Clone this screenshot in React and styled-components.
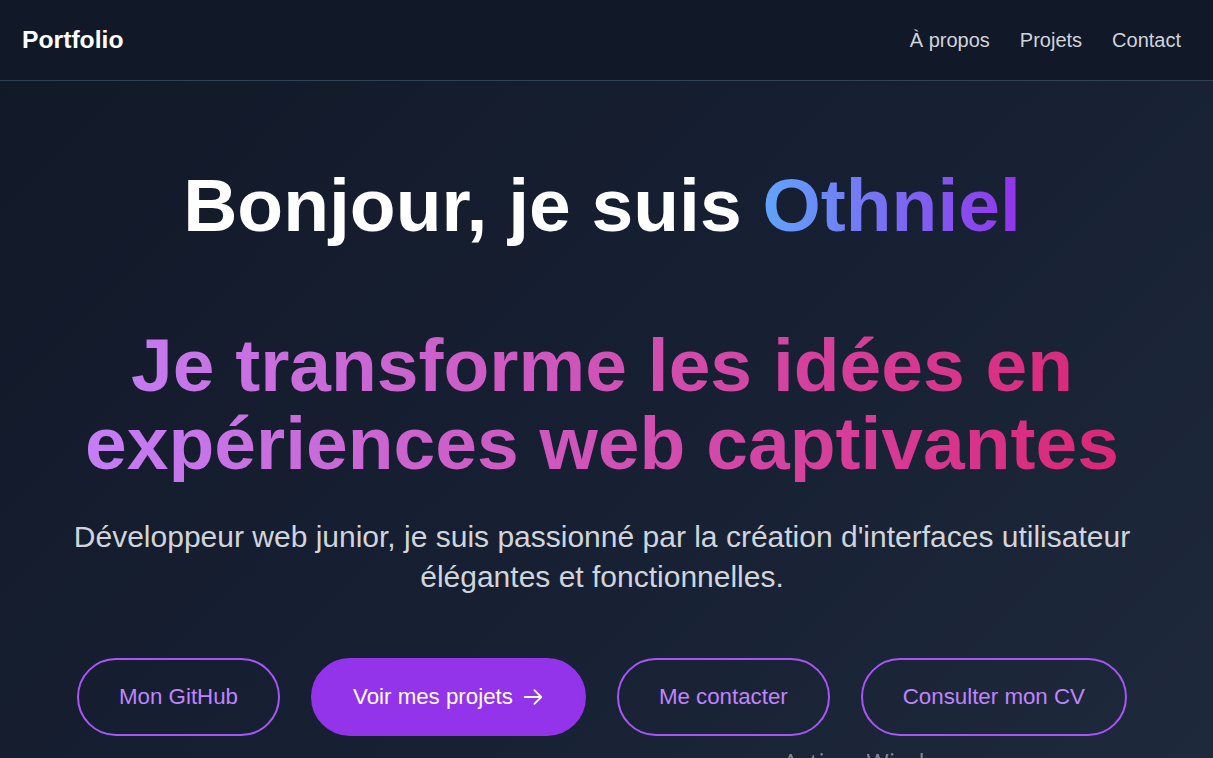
import React from "react";
import styled, { createGlobalStyle } from "styled-components";

const GlobalStyle = createGlobalStyle`
  * {
    box-sizing: border-box;
  }
  html,
  body {
    margin: 0;
    padding: 0;
    background: #111827;
    font-family: "Liberation Sans", Arial, sans-serif;
  }
`;

const Page = styled.div`
  min-height: 100vh;
  display: flex;
  flex-direction: column;
  background: linear-gradient(135deg, #111827 0%, #172033 55%, #1e293b 100%);
  overflow: hidden;
`;

const Navbar = styled.nav`
  height: 81px;
  display: flex;
  align-items: center;
  justify-content: space-between;
  padding: 0 32px 0 22px;
  background: #111827;
  border-bottom: 1px solid #334155;
`;

const Brand = styled.span`
  color: #ffffff;
  font-size: 24.7px;
  font-weight: bold;
`;

const NavLinks = styled.div`
  display: flex;
  align-items: center;
  gap: 30px;
`;

const NavLink = styled.a`
  color: #d1d5db;
  font-size: 20px;
  text-decoration: none;
  cursor: pointer;
`;

const Hero = styled.section`
  display: flex;
  flex-direction: column;
  align-items: center;
  text-align: center;
  padding: 87px 9px 0 0;
`;

const Greeting = styled.h1`
  margin: 0;
  color: #ffffff;
  font-size: 75px;
  line-height: 75px;
  font-weight: bold;
`;

const Name = styled.span`
  background: linear-gradient(90deg, #60a5fa, #9333ea);
  -webkit-background-clip: text;
  background-clip: text;
  color: transparent;
`;

const Tagline = styled.h2`
  display: inline-block;
  margin: 83px 0 0;
  font-size: 75px;
  line-height: 78px;
  font-weight: bold;
  background: linear-gradient(90deg, #c47ef6, #db2777);
  -webkit-background-clip: text;
  background-clip: text;
  color: transparent;
`;

const Intro = styled.p`
  margin: 35px 0 0;
  max-width: 1100px;
  color: #d1d5db;
  font-size: 30px;
  line-height: 40px;
`;

const Actions = styled.div`
  display: flex;
  align-items: center;
  gap: 31px;
  margin-top: 61px;
`;

const Button = styled.a`
  display: inline-flex;
  align-items: center;
  gap: 9px;
  height: 78px;
  padding: 0 40px;
  border-radius: 999px;
  border: 2px solid ${(p) => (p.$primary ? "#9333ea" : "#a855f7")};
  background: ${(p) => (p.$primary ? "#9333ea" : "transparent")};
  color: ${(p) => (p.$primary ? "#ffffff" : "#c084fc")};
  font-size: 22.3px;
  text-decoration: none;
  cursor: pointer;
`;

const Watermark = styled.div`
  position: fixed;
  left: 783px;
  top: 745px;
  color: rgba(190, 194, 202, 0.6);
  font-family: "Noto Sans", "Open Sans", sans-serif;
  font-size: 24px;
  pointer-events: none;
`;

const ArrowIcon = () => (
  <svg
    width="22"
    height="22"
    viewBox="0 0 24 24"
    fill="none"
    stroke="currentColor"
    strokeWidth="2"
    strokeLinecap="round"
    strokeLinejoin="round"
  >
    <path d="M13.5 4.5 21 12m0 0-7.5 7.5M21 12H3" />
  </svg>
);

const App = () => {
  return (
    <Page>
      <GlobalStyle />
      <Navbar>
        <Brand>Portfolio</Brand>
        <NavLinks>
          <NavLink>À propos</NavLink>
          <NavLink>Projets</NavLink>
          <NavLink>Contact</NavLink>
        </NavLinks>
      </Navbar>
      <Hero>
        <Greeting>
          Bonjour, je suis <Name>Othniel</Name>
        </Greeting>
        <Tagline>
          Je transforme les idées en
          <br />
          expériences web captivantes
        </Tagline>
        <Intro>
          Développeur web junior, je suis passionné par la création d'interfaces
          utilisateur élégantes et fonctionnelles.
        </Intro>
        <Actions>
          <Button>Mon GitHub</Button>
          <Button $primary>
            Voir mes projets
            <ArrowIcon />
          </Button>
          <Button>Me contacter</Button>
          <Button>Consulter mon CV</Button>
        </Actions>
      </Hero>
      <Watermark>Activer Windows</Watermark>
    </Page>
  );
};

export default App;
